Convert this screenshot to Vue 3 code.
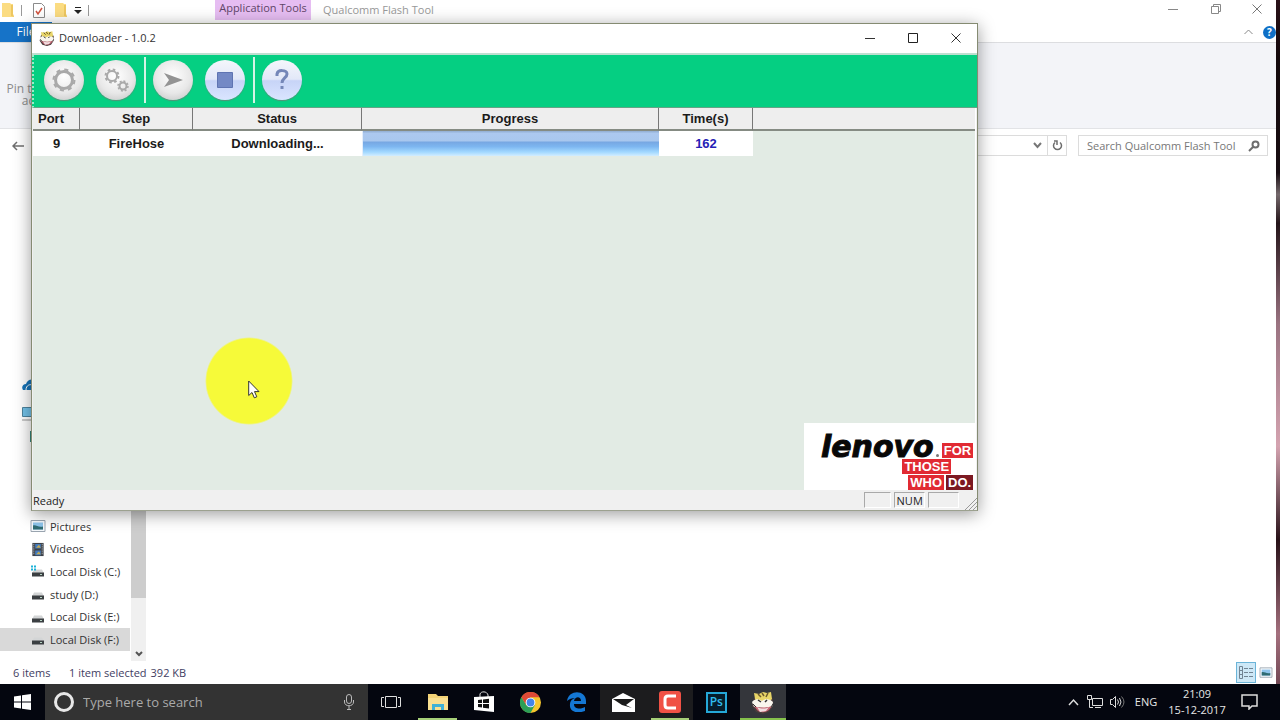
<script setup>
import { ref } from 'vue'

const explorerSearch = ref('')
const taskbarSearch = ref('')

const job = { port: '9', step: 'FireHose', status: 'Downloading...', progress: 100, time: '162' }

const places = [
  { name: '', icon: 'pc' },
  { name: '', icon: 'desktop' },
  { name: '', icon: '' },
  { name: '', icon: '' },
  { name: '', icon: 'music' },
  { name: 'Pictures', icon: 'picture' },
  { name: 'Videos', icon: 'video' },
  { name: 'Local Disk (C:)', icon: 'sysdisk' },
  { name: 'study (D:)', icon: 'disk' },
  { name: 'Local Disk (E:)', icon: 'disk' },
  { name: 'Local Disk (F:)', icon: 'disk', selected: true },
]

const apps = [
  { icon: 'taskview', label: 'Task View' },
  { icon: 'files', label: 'File Explorer', state: 'open' },
  { icon: 'store', label: 'Store' },
  { icon: 'chrome', label: 'Chrome' },
  { icon: 'edge', label: 'Edge' },
  { icon: 'mail', label: 'Mail', state: 'dim' },
  { icon: 'camtasia', label: 'Camtasia', state: 'open dim' },
  { icon: 'photoshop', label: 'Photoshop' },
  { icon: 'mascot', label: 'Downloader', state: 'active' },
]
</script>

<template>
  <svg class="symbols" aria-hidden="true">
    <symbol id="mascot" viewBox="0 0 24 24">
      <path d="M3 8l5-4h9l5 5v7l-4 6-6 2-7-2-4-6z" fill="#4a3d3c" />
      <path d="M4 9 3 3l5 1 4-2 4 1 4-1 1 7-3 3H6z" fill="#e8d568" />
      <path d="M7 4l3 3M17 3l-2 4M11 3l2 3" stroke="#6d5a2c" stroke-width="1.5" />
      <path d="M1 12c3-4 7-3 10-1 3-3 9-2 11 1l-1 5-8 1-10-1z" fill="#f9f6ee" />
      <path d="M7 10l3 2M16 10l-2 2" stroke="#333" stroke-width="1.500" />
      <path d="M3 16c5 2 12 2 18 0l-3 4c-4 3-9 3-12 0z" fill="#c96473" />
      <path d="M6 17c4 2 9 2 12 0l-3 4-6 1z" fill="#f0dde0" />
      <path d="M2 14l3 3M20 17l2-3" stroke="#333" />
    </symbol>
    <symbol id="folder" viewBox="0 0 14 16">
      <path d="M1 1h8l1 1h2v10l1 3H1z" fill="#fbdc82" /><path d="M10 3h2v9l1 3-3-1z" fill="#eec760" />
    </symbol>
    <symbol id="picture" viewBox="0 0 16 14">
      <path d="M1 1h14v11H1z" fill="#f6f9fc" stroke="#9aa5b0" /><path d="M3 3h10v7H3z" fill="#8ec5ec" />
      <path d="M3 6c3-1 5 2 10 1v3H3z" fill="#2f6c73" />
    </symbol>
    <symbol id="video" viewBox="0 0 16 16">
      <path d="M2 1h12v14H2z" fill="#3c4148" /><path d="M5 2h6v5H5zM5 9h6v5H5z" fill="#437bbf" />
      <path d="M6 6l3-3 2 3zM6 13l3-3 2 3z" fill="#c6ab50" />
      <path d="M3.500 2v12M12.500 2v12" stroke="#c8ccd0" stroke-dasharray="1 1" />
    </symbol>
    <symbol id="disk" viewBox="0 0 16 14">
      <path d="M4 5h8l2 4H2z" fill="#d3d5d6" /><path d="M2 8h12v4H2z" fill="#3b3f42" /><path d="M10 10h2" stroke="#b6d3c3" />
    </symbol>
    <symbol id="sysdisk" viewBox="0 0 16 14">
      <path d="M4 5h8l2 4H2z" fill="#d3d5d6" /><path d="M2 8h12v4H2z" fill="#3b3f42" /><path d="M10 10h2" stroke="#b6d3c3" />
      <path d="M1 1h2v2H1zM4 1h2v2H4zM1 4h2v2H1zM4 4h2v2H4z" fill="#1cb2d8" />
    </symbol>
  </svg>

  <div class="desktop">
    <main class="explorer">
      <header class="caption">
        <div class="quick">
          <svg width="14" height="16"><use href="#folder" /></svg>
          <i class="bar"></i>
          <svg class="check" width="12" height="15" viewBox="0 0 12 15"><path d="M.5.5h8l3 3v11H.5z" fill="#fff" stroke="#8b8b8b" /><path d="M3 8l2 3 4-6" fill="none" stroke="#d0533f" stroke-width="1.500" /></svg>
          <svg width="14" height="16"><use href="#folder" /></svg>
          <svg class="drop" width="8" height="7" viewBox="0 0 8 7"><path d="M1 .5h6" stroke="#222" /><path d="M0 3h8L4 7z" fill="#222" /></svg>
          <i class="bar"></i>
        </div>
        <div class="context">Application Tools</div>
        <div class="name">Qualcomm Flash Tool</div>
        <div class="controls">
          <button aria-label="Minimize Explorer"><svg width="10" height="10"><path d="M0 5.500h10" stroke="#888" /></svg></button>
          <button aria-label="Restore Explorer"><svg width="10" height="10" fill="none" stroke="#888"><path d="M.5 2.500h7v7h-7zM2.500 2.500v-2h7v7h-2" /></svg></button>
          <button aria-label="Close Explorer"><svg width="10" height="10"><path d="M.5.500l9 9m0-9l-9 9" stroke="#777" /></svg></button>
        </div>
      </header>

      <div class="tabs">
        <button class="file">File</button>
        <button class="collapse" aria-label="Collapse ribbon"><svg width="9" height="6" fill="none" stroke="#888"><path d="M.5 5l4-4 4 4" /></svg></button>
        <button class="help" aria-label="Explorer help">?</button>
      </div>

      <div class="ribbon">
        <button class="pin">
          <svg width="20" height="24" viewBox="0 0 20 24" fill="none" stroke="#b5b9bf" stroke-width="2"><path d="M10 2l8 6-5 3-2 6-9-9 6-1z" /></svg>
          <span>Pin to Quick access</span>
        </button>
      </div>

      <div class="address">
        <button class="back" aria-label="Back"><svg width="12" height="10" fill="none" stroke="#6f6f6f" stroke-width="1.500"><path d="M12 5H1m4-4L1 5l4 4" /></svg></button>
        <div class="path">
          <button aria-label="Previous locations"><svg width="9" height="7" fill="none" stroke="#777" stroke-width="2"><path d="M1 1l3.500 4L8 1" /></svg></button>
          <button class="refresh" aria-label="Refresh"><svg width="11" height="12" fill="none" stroke="#6d6d6d" stroke-width="1.500"><path d="M3 2.500a4 4 0 1 0 5 0M2 1h3v4" /></svg></button>
        </div>
        <div class="find">
          <input v-model="explorerSearch" type="text" aria-label="Search Qualcomm Flash Tool" placeholder="Search Qualcomm Flash Tool">
          <svg width="12" height="12" fill="none" stroke="#6d6d6d" stroke-width="2"><circle cx="7.500" cy="4.500" r="3" /><path d="M5 7l-4 4" /></svg>
        </div>
      </div>

      <div class="body">
        <nav aria-label="Places">
          <div class="rows">
            <svg class="cloud" width="16" height="12" viewBox="0 0 16 12"><path d="M1 11C-1 8 1 5 4 5c1-4 6-6 10-3v9z" fill="#1673b8" /><path d="M4 11c0-5 4-6 7-5" fill="none" stroke="#fff" /></svg>
            <a v-for="(p, i) in places" :key="i" href="#" :class="{ selected: p.selected }">
              <svg v-if="p.icon === 'pc'" class="pc" width="16" height="14"><path d="M.5.500h15v9H.5z" fill="#73c2e9" stroke="#4d849f" /><path d="M0 13h14" stroke="#999" /></svg>
              <svg v-else-if="p.icon === 'desktop'" width="16" height="12"><path d="M0 0h16v11H0z" fill="#36877c" /></svg>
              <svg v-else-if="p.icon === 'music'" width="16" height="14"><circle cx="5" cy="10" r="4" fill="#2296ba" /></svg>
              <svg v-else-if="p.icon" width="16" height="15"><use :href="'#' + p.icon" /></svg>
              <span>{{ p.name }}</span>
            </a>
          </div>
          <div class="scroll"><div class="thumb"></div><button aria-label="Scroll down"><svg width="8" height="6" fill="none" stroke="#555" stroke-width="2"><path d="M1 1l3 3 3-3" /></svg></button></div>
        </nav>
      </div>

      <footer class="summary">
        <span class="count">6 items</span><span>1 item selected</span><span class="size">392 KB</span>
        <button class="view on" aria-label="Details view"><svg width="16" height="15" fill="none" stroke="#718493"><path d="M1.500 1.500h3v12h-3zM1 5.500h4M1 9.500h4M6 3.500h4m1 0h4M6 7.500h4m1 0h4M6 11.500h4m1 0h4" /></svg></button>
        <button class="view" aria-label="Thumbnail view"><svg width="14" height="12"><use href="#picture" /></svg></button>
      </footer>
    </main>

    <section class="downloader" aria-label="Downloader">
      <header class="title">
        <svg width="16" height="16"><use href="#mascot" /></svg>
        <h1>Downloader - 1.0.2</h1>
        <div class="controls">
          <button aria-label="Minimize"><svg width="10" height="10"><path d="M0 5.500h10" stroke="#333" /></svg></button>
          <button aria-label="Maximize"><svg width="10" height="10"><path d="M.5.500h9v9h-9z" fill="none" stroke="#222" /></svg></button>
          <button aria-label="Close"><svg width="10" height="10"><path d="M.5.500l9 9m0-9l-9 9" stroke="#333" /></svg></button>
        </div>
      </header>

      <div class="tools" role="toolbar">
        <div class="group">
          <button aria-label="Settings"><svg width="26" height="26" viewBox="-13 -13 26 26" fill="none" stroke="#a9a9a9"><circle r="8.500" stroke-width="3" /><circle r="10.500" stroke-width="2" stroke-dasharray="4.100 4.140" /></svg></button>
          <button aria-label="Advanced settings"><svg width="26" height="26" viewBox="0 0 26 26" fill="none" stroke="#a9a9a9"><circle cx="9" cy="9" r="5" stroke-width="2" /><circle cx="9" cy="9" r="6.500" stroke-width="2" stroke-dasharray="2.600 2.500" /><circle cx="20" cy="19" r="3.500" stroke-width="2" /><circle cx="20" cy="19" r="5" stroke-width="1.500" stroke-dasharray="2 1.900" /></svg></button>
        </div>
        <div class="group">
          <button aria-label="Start"><svg width="22" height="16"><path d="M2 1l19 7-19 7 5-7z" fill="#949494" /></svg></button>
          <button class="blue" aria-label="Stop"><svg width="16" height="16"><path d="M.5.500h15v15H.5z" fill="#7489c5" stroke="#5f74b2" /></svg></button>
        </div>
        <div class="group">
          <button class="blue" aria-label="Help"><svg width="16" height="24" fill="none" stroke="#7587b8" stroke-width="3"><path d="M3 8V6c1-5 10-4 10 0 0 4-5 4-5 9" /><path d="M8 18v3" /></svg></button>
        </div>
      </div>

      <div class="content">
        <table>
          <colgroup><col class="c1"><col class="c2"><col class="c3"><col class="c4"><col class="c5"><col></colgroup>
          <thead><tr><th class="port">Port</th><th>Step</th><th>Status</th><th>Progress</th><th>Time(s)</th><td class="rest"></td></tr></thead>
          <tbody><tr>
            <td>{{ job.port }}</td><td>{{ job.step }}</td><td>{{ job.status }}</td>
            <td class="meter"><progress :value="job.progress" max="100" aria-label="Download progress"></progress></td>
            <td class="time">{{ job.time }}</td>
          </tr></tbody>
        </table>
        <div class="brand">
          <div class="line"><span class="word">lenovo</span><i class="reg"></i><b>FOR</b></div>
          <div class="line second"><b>THOSE</b></div>
          <div class="line"><b>WHO</b><b class="dark">DO.</b></div>
        </div>
      </div>

      <footer class="ready">
        <span class="msg">Ready</span><i class="pane"></i><span class="pane num">NUM</span><i class="pane"></i>
        <svg width="12" height="12" stroke="#999"><path d="M0 12L12 0M4 12l8-8M8 12l4-4" /></svg>
      </footer>
    </section>

    <div class="pointer">
      <svg width="12" height="19" viewBox="0 0 12 19"><path d="M.7 1v14.500l3.300-3 2.300 5.300 2.500-1-2.300-5.200H11z" fill="#fff" stroke="#333" /></svg>
    </div>

    <footer class="taskbar">
      <button class="start" aria-label="Start menu"><svg width="17" height="16" fill="#fff"><path d="M0 2.500l7-1v6H0zM8 1.300L17 0v7.500H8zM0 8.500h7v6l-7-1zM8 8.500h9V16l-9-1.300z" /></svg></button>
      <div class="cortana">
        <svg width="22" height="22"><circle cx="11" cy="11" r="8.500" fill="none" stroke="#e8e8e8" stroke-width="3" /></svg>
        <input v-model="taskbarSearch" type="text" aria-label="Type here to search" placeholder="Type here to search">
        <svg width="12" height="16" fill="none" stroke="#bbb"><rect x="3.500" y=".5" width="5" height="9" rx="2.500" /><path d="M1.500 6v2c0 5 9 5 9 0V6M6 12v3M4 15.500h4" /></svg>
      </div>
      <div class="apps">
        <button v-for="a in apps" :key="a.icon" :class="a.state" :aria-label="a.label">
          <svg v-if="a.icon === 'taskview'" width="20" height="14" fill="none" stroke="#ddd"><path d="M4.500 1.500h11v11h-11zM3 2.500H.5v9H3M17 2.500h2.500v9H17" /></svg>
          <svg v-else-if="a.icon === 'files'" width="22" height="18"><path d="M1 1h8l2 2h10v14H1z" fill="#f3d276" /><path d="M1 5h20v12H1z" fill="#f9df91" /><path d="M5 17v-6h12v6h-3v-3H8v3z" fill="#3fb1d6" /></svg>
          <svg v-else-if="a.icon === 'store'" width="20" height="22"><path d="M6 6V3c1-3 7-3 8 1v2" fill="none" stroke="#ddd" /><path d="M0 6l20-1v16l-20-2z" fill="#fff" /><path d="M4 9l4-.5V12H4zM9 8.400l6-.6V12H9zM4 13h4v3.500L4 16zM9 13h6v4.500l-6-.8z" fill="#111" /></svg>
          <svg v-else-if="a.icon === 'chrome'" width="21" height="21" viewBox="-10 -10 20 20"><circle r="10" fill="#f6c62d" /><path d="M-8.700-5A10 10 0 0 1 8.700-5H0L-4.500 2z" fill="#df4936" /><path d="M-8.700-5A10 10 0 0 0 0 10L4.500 2-4 2.500z" fill="#2c9f57" /><circle r="4.600" fill="#fff" /><circle r="3.700" fill="#4385e8" /></svg>
          <svg v-else-if="a.icon === 'edge'" width="20" height="20" viewBox="0 0 20 20"><path d="M0 9C2-3 19-2 19 9v3H7c0 6 8 5 11 3v4C10 22 2 20 3 12c0-3 2-5 5-6-3 0-6 1-8 3zm7 0h7c0-5-6-5-7 0z" fill="#1477d4" /></svg>
          <svg v-else-if="a.icon === 'mail'" width="23" height="19"><path d="M0 6l11-6 12 6v13H0z" fill="#fff" /><path d="M1 6h21l-8 6 6 3-10-3z" fill="#1a1a1a" /></svg>
          <svg v-else-if="a.icon === 'camtasia'" width="22" height="22"><rect width="22" height="22" rx="3" fill="#f05145" /><path d="M17 5H9Q6 5 6 8v6q0 3 3 3h8" fill="none" stroke="#fff" stroke-width="3" /></svg>
          <span v-else-if="a.icon === 'photoshop'" class="ps">Ps</span>
          <svg v-else width="24" height="24"><use href="#mascot" /></svg>
        </button>
      </div>
      <div class="tray">
        <button aria-label="Show hidden icons"><svg width="11" height="8" fill="none" stroke="#ddd" stroke-width="1.500"><path d="M1 7l4.500-5L10 7" /></svg></button>
        <button aria-label="Network"><svg width="16" height="14" fill="none" stroke="#ddd"><path d="M5.500 3.500h10v7h-10zM8 12.500h6M.5.500h4v4h-4zM2.500 4.500v8H6" /></svg></button>
        <button aria-label="Volume"><svg width="16" height="14" fill="none" stroke="#ddd"><path d="M1.500 4.500h2l3-3v11l-3-3h-2zM8.500 4.500q2 2.500 0 5M10.500 3q3 4 0 8" /><path d="M12.500 1.500q5 5.500 0 11" stroke="#777" /></svg></button>
        <button class="lang">ENG</button>
        <button class="clock"><span>21:09</span><span>15-12-2017</span></button>
        <button aria-label="Notifications"><svg width="17" height="16" fill="none" stroke="#ddd" stroke-width="1.500"><path d="M1 1h15v11h-5l-3 3v-3H1z" /></svg></button>
      </div>
    </footer>
  </div>
</template>

<style>
body { background: #fff; overflow: hidden; }
</style>

<style scoped>
* { box-sizing: border-box; }
svg { display: block; flex: none; }
.symbols { position: absolute; width: 0; height: 0; }
button { border: 0; padding: 0; margin: 0; background: none; color: inherit; font: inherit; display: flex; align-items: center; justify-content: center; }
input { border: 0; padding: 0; background: none; font: inherit; min-width: 0; outline: 0; }
.desktop {
  position: relative; min-height: 100vh; display: flex; flex-direction: column; padding-right: 4px; overflow: hidden;
  font: 12px/16px "Open Sans", "Noto Sans", sans-serif; color: #333;
  background: linear-gradient(#2a1118, #14090c 8%, #180d12 24%, #75696c 27%, #241419 31%, #9a7381 45%, #d4a3b0 62%, #281118 75%, #a4707e 88%, #4e2c37);
}
.explorer { flex: 1; display: flex; flex-direction: column; background: #fff; }
.caption { display: flex; height: 22px; align-items: center; }
.quick { width: 215px; display: flex; align-items: center; gap: 9px; padding-left: 1px; padding-bottom: 2px; }
.quick .bar { width: 1px; height: 11px; background: #999; margin: 0 -4px 0 -3px; }
.quick .check { margin-left: 6px; }
.quick .drop { margin-left: -3px; }
.context { align-self: flex-start; height: 20px; width: 96px; background: #e6bdf2; text-align: center; color: #5f4668; white-space: nowrap; font-size: 11px; }
.name { margin-left: 12px; padding-bottom: 2px; color: #999; font-size: 11px; }
.controls { margin-left: auto; display: flex; }
.controls button { width: 43px; height: 18px; }
.caption .controls { padding-bottom: 4px; }
.caption .controls button:last-child { width: 39px; }
.tabs { display: flex; height: 21px; align-items: stretch; border-bottom: 1px solid #dcdde0; }
.file { width: 52px; background: #1673c8; color: #fff; }
.collapse { margin-left: auto; width: 20px; }
.help { width: 13px; height: 13px; border-radius: 50%; background: #0f6fc6; color: #fff; font-weight: 700; font-size: 10px; align-self: center; margin-left: 5px; }
.ribbon { height: 86px; background: #f3f4f8; border-bottom: 1px solid #e2e3e6; }
.pin { width: 80px; flex-direction: column; color: #8c8c8c; line-height: 12px; padding: 14px 4px 0; gap: 2px; }
.address { display: flex; align-items: center; height: 33px; padding: 0 8px 0 12px; }
.path { flex: 1; margin: 0 11px; height: 21px; border: 1px solid #dcdcdc; display: flex; justify-content: flex-end; }
.path button { width: 19px; }
.path .refresh { border-left: 1px solid #dcdcdc; }
.find { width: 190px; height: 21px; border: 1px solid #dcdcdc; display: flex; align-items: center; padding: 0 7px 0 8px; font-size: 11px; }
.find input { flex: 1; }
.find input::placeholder { color: #777; opacity: 1; }
.body { flex: 1; display: flex; }
nav { display: flex; width: 146px; }
.rows { flex: 1; display: flex; flex-direction: column; justify-content: flex-end; padding-bottom: 10px; }
.rows a { flex: 0 0 4.620%; display: flex; align-items: center; gap: 4px; padding-left: 30px; color: #333; text-decoration: none; white-space: nowrap; font-size: 11px; }
.rows a.selected { background: #d9d9d9; }
.rows .cloud { margin: 0 0 12px 22px; }
.rows .pc { margin-left: -8px; }
.scroll { width: 15px; background: #f0f0f0; display: flex; flex-direction: column; justify-content: flex-end; margin-left: 1px; }
.thumb { flex: 1; background: #cdcdcd; margin-bottom: 48px; }
.scroll button { height: 15px; }
.summary { height: 23px; display: flex; align-items: center; padding: 0 0 0 13px; color: #3f3d62; font-size: 11px; }
.count { width: 56px; }
.size { margin-left: 4px; }
.view { width: 20px; height: 21px; }
.view.on { margin-left: auto; background: #cde8f7; border: 1px solid #6bb4d8; }

.downloader {
  position: absolute; left: 31px; top: 23px; width: 74%; min-height: 488px; display: flex; flex-direction: column;
  background: #f0f0f0; border: 1px solid #858b72; border-bottom-color: #9ca18f; box-shadow: 0 3px 16px rgba(0, 0, 0, .4);
}
.title { display: flex; height: 31px; align-items: center; background: #fff; padding: 0 0 1px 7px; border-bottom: 2px solid #bfdfd0; }
.title h1 { margin: 0 0 0 4px; font-size: 11px; font-weight: 400; color: #333; }
.tools { height: 53px; background: #05cf82; display: flex; align-items: center; padding-bottom: 3px; border-left: 2px dotted #9becca; border-bottom: 1px solid #66a486; }
.group { display: flex; gap: 12px; padding: 0 8px 0 10px; }
.group + .group { padding: 0 8px 0 7px; border-left: 2px solid #d5f3e5; height: 46px; align-items: center; }
.group button { width: 40px; height: 40px; border-radius: 50%; background: radial-gradient(circle at 50% 40%, #fff, #e8e8e8 55%, #bdbdbd); box-shadow: 0 1px 1px #5c8e78; }
.group .blue { background: linear-gradient(#f4f6fb 0%, #e2e8f8 48%, #c7d4f7 52%, #dae5ff); }
.content { flex: 1; background: #e2ebe4; margin: 0 1px; position: relative; border-right: 1px solid #fff; }
table { width: 100%; table-layout: fixed; border-collapse: separate; border-spacing: 0; font: bold 13px/16px "Liberation Sans", Arial, sans-serif; color: #1b1b1b; text-align: center; }
th, td { padding: 0; white-space: nowrap; }
th, .rest { height: 23px; background: #eee; border-right: 1px solid #777; border-bottom: 2px solid #858b83; }
.rest { border-right: 0; }
.port { padding-right: 10px; }
tbody td { height: 25px; background: #fff; }
.c1 { width: 47px; } .c2 { width: 113px; } .c3 { width: 169px; } .c4 { width: 297px; } .c5 { width: 94px; }
.time { color: #2521b5; }
tbody .meter { border-left: 1px solid #e4eefb; }
progress { display: block; width: 100%; height: 25px; appearance: none; border: 0; }
progress::-webkit-progress-bar { background: #dbe9f5; }
progress::-webkit-progress-value { background: linear-gradient(#91add1, #acc8ef 10%, #a8c7ee 40%, #77a7e2 44%, #7db6f0 62%, #a1d8ff 84%, #d2edff); }
.brand { position: absolute; right: 0; bottom: 0; width: 171px; padding: 12px 2px 0 12px; background: #fff; }
.line { display: flex; justify-content: flex-end; align-items: flex-end; gap: 2px; height: 15px; margin-bottom: 1px; }
.line:first-child { height: 23px; }
.line:last-child { margin-bottom: 0; }
.second { padding-right: 22px; }
.word { font: italic bold 30px/22px "DejaVu Sans", sans-serif; color: #080808; -webkit-text-stroke: 1px #080808; }
.reg { width: 3px; height: 3px; border-radius: 50%; background: #777; margin: 0 1px 1px 0; }
.line b { height: 15px; padding: 0 2px; background: #e12a33; color: #fff; font: bold 13px/15px "Liberation Sans", Arial, sans-serif; }
.line .dark { background: #7c1922; }
.ready { height: 20px; display: flex; align-items: center; gap: 3px; padding-left: 1px; color: #222; font-size: 11px; }
.msg { margin-right: auto; padding-top: 2px; }
.pane { width: 27px; height: 16px; border: 1px solid #a9a9a9; border-right-color: #fff; border-bottom-color: #fff; text-align: center; }
.num { width: 31px; line-height: 16px; }
.num + .pane { width: 31px; }
.ready svg { margin-left: 3px; align-self: flex-end; }
.pointer { position: absolute; left: 205px; top: 337px; width: 88px; height: 88px; padding: 43px 0 0 43px; border-radius: 50%; background: radial-gradient(closest-side, #f6fa39 96%, rgba(246, 250, 57, 0)); }

.taskbar { height: 36px; display: flex; background: #04060f; color: #e6e6e6; margin-right: -4px; }
.start { width: 45px; }
.cortana { width: 323px; background: #333; display: flex; align-items: center; padding: 0 13px 0 8px; gap: 8px; font-size: 13px; }
.cortana input { flex: 1; color: #ddd; }
.cortana input::placeholder { color: #aaa; opacity: 1; }
.apps { width: 418px; display: grid; grid-template-columns: repeat(9, 1fr); }
.apps button { position: relative; }
.apps .dim { background: #1c1c1e; }
.apps .active { background: #34363b; }
.apps .open::after, .apps .active::after { content: ""; position: absolute; left: 4px; right: 4px; bottom: 0; height: 2px; background: #a6cf78; }
.apps .active::after { left: 0; right: 0; background: #86c24c; }
.ps { width: 21px; height: 21px; border: 2px solid #25a8d8; background: #061d2b; color: #31bdee; font-weight: 600; font-size: 12px; line-height: 16px; }
.tray { margin-left: auto; display: flex; align-items: stretch; padding-right: 12px; font-size: 11px; }
.tray button { width: 22px; }
.tray .lang { width: 36px; }
.tray .clock { width: 66px; flex-direction: column; padding-bottom: 1px; }
.tray .clock + button { width: 38px; }
</style>
